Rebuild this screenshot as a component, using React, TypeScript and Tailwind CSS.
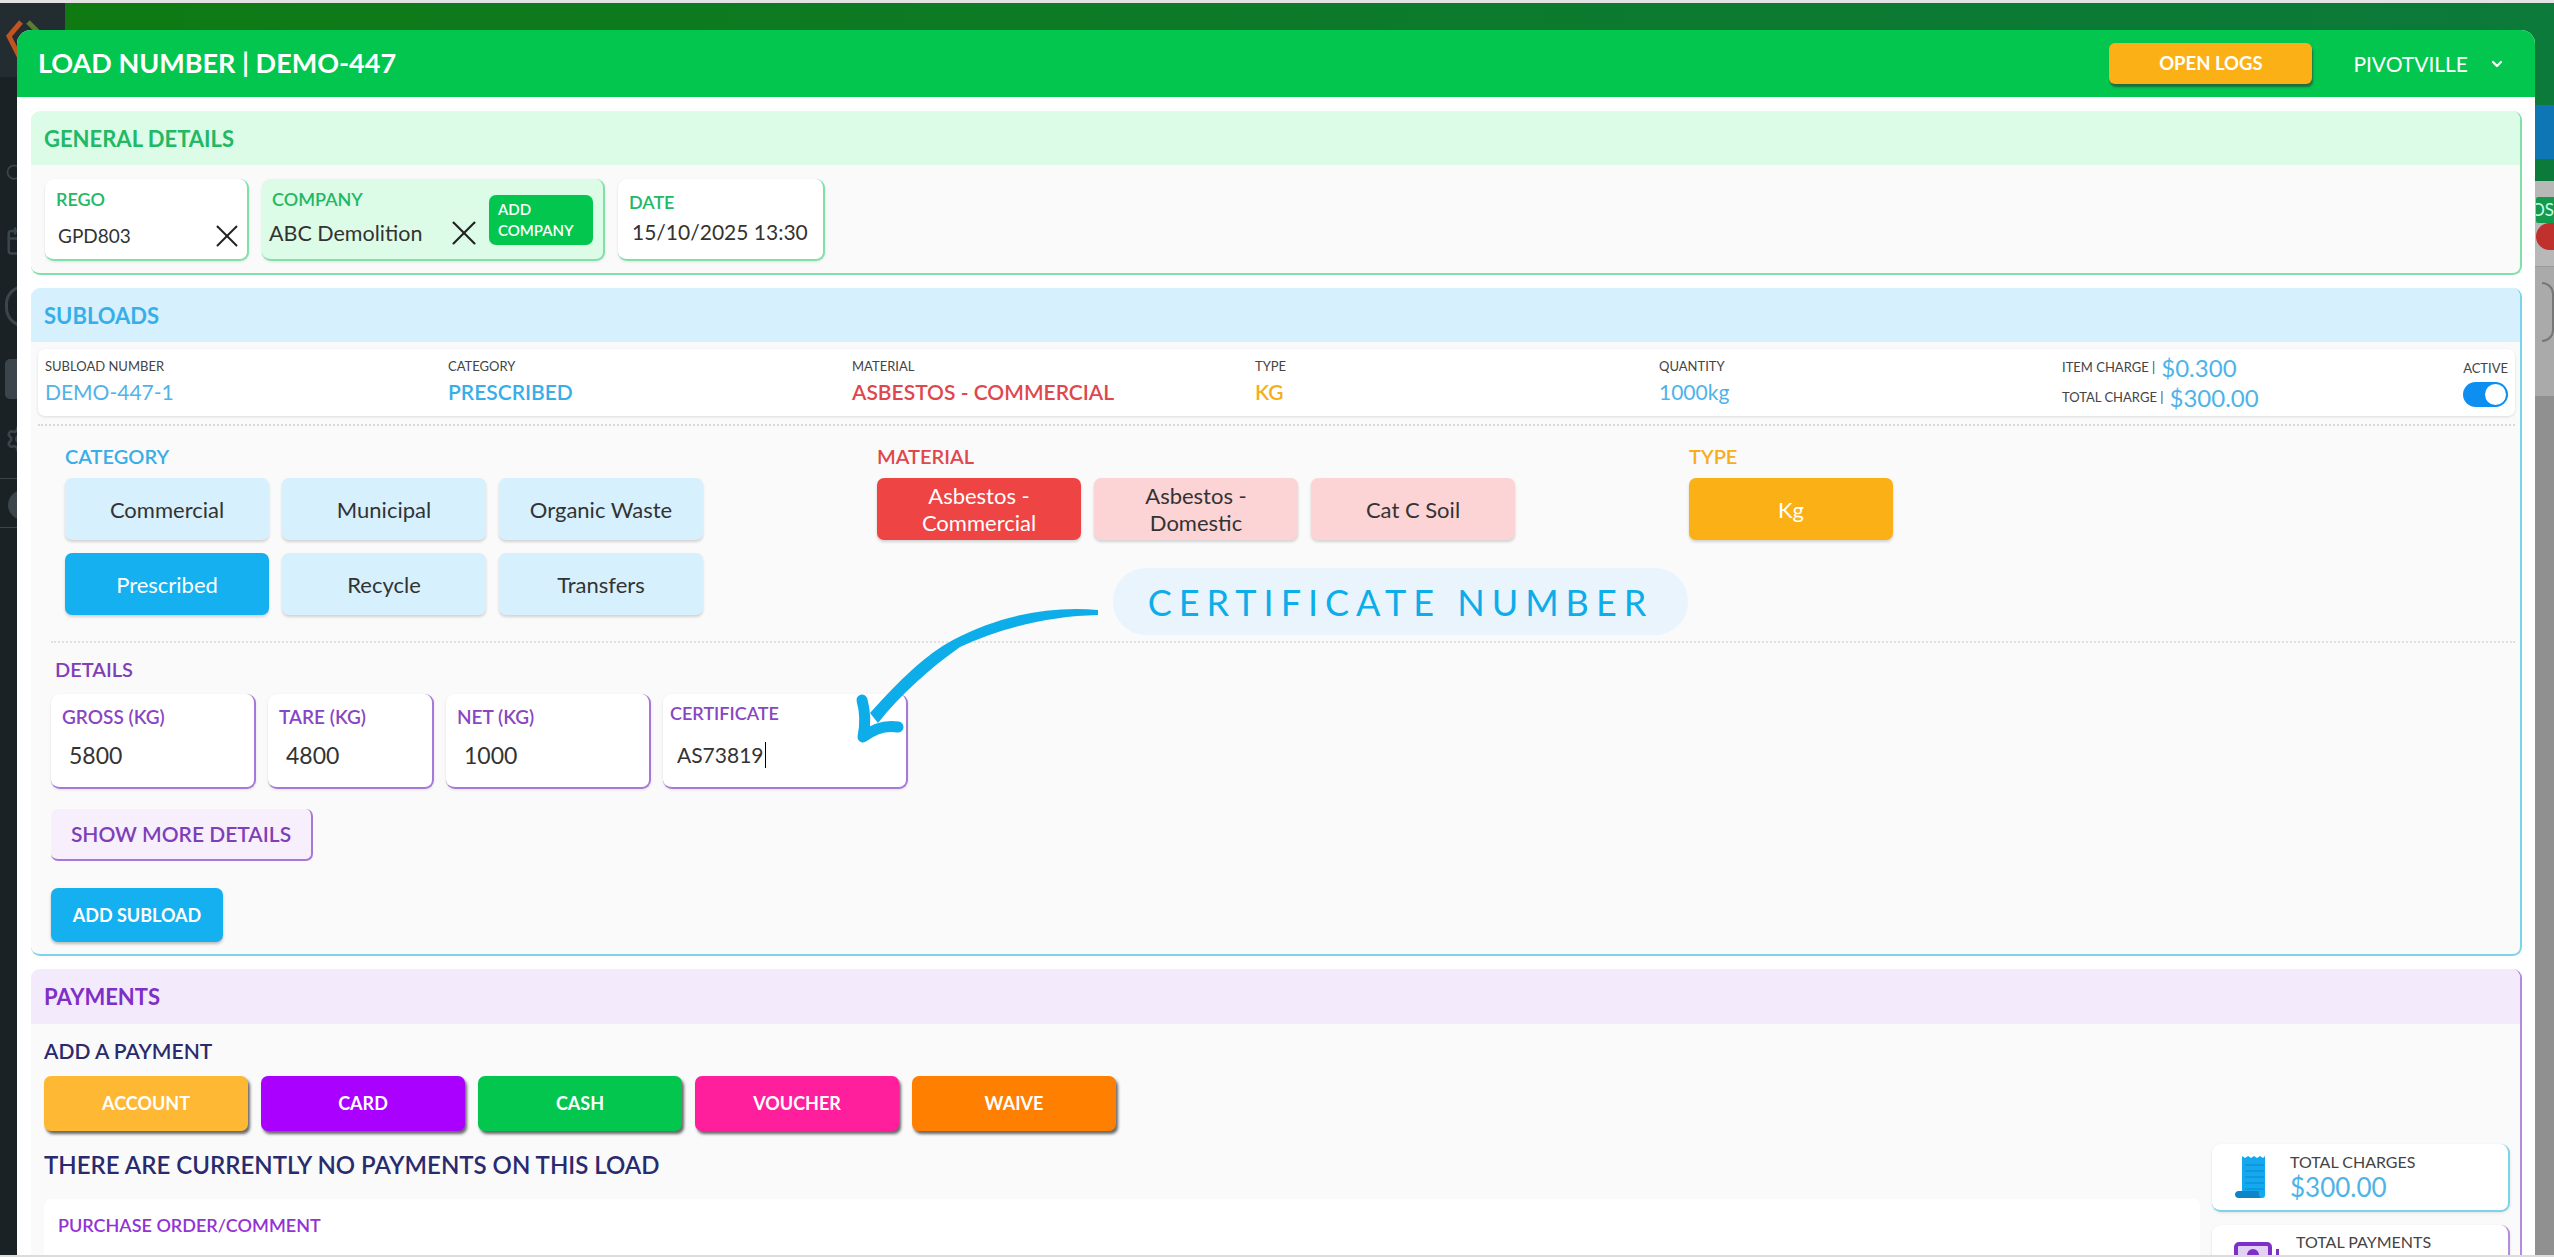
import React from 'react';
import { ChevronDown, X, Search, Calendar, Settings } from 'lucide-react';

const font = "font-['Lato','Liberation_Sans',sans-serif]";

const ChoiceButton = ({ label, className }: { label: string; className: string }) => (
  <div className={`flex h-[62px] w-[204px] items-center justify-center rounded-[7px] px-4 text-center text-[22px] leading-[27px] shadow-[0_2px_3px_rgba(0,0,0,0.16)] ${className}`}>
    {label}
  </div>
);

const PayButton = ({ label, className }: { label: string; className: string }) => (
  <div className={`flex h-[55px] w-[204px] items-center justify-center rounded-[7px] text-[18px] font-bold text-white shadow-[2px_3px_3px_rgba(40,40,40,0.7)] ${className}`}>
    {label}
  </div>
);

const DetailField = ({ label, value, width, certificate }: { label: string; value: string; width: string; certificate?: boolean }) => (
  <div className={`${width} h-[95px] rounded-[9px] border-r-2 border-b-2 border-[#a878d8] bg-white shadow-[0_1px_3px_rgba(0,0,0,0.1)] ${certificate ? 'pt-[8px] pl-[7px]' : 'pt-[12px] pl-[11px]'}`}>
    <div className={`leading-[22px] font-semibold text-[#8a45c4] ${certificate ? 'text-[18px]' : 'text-[19px]'}`}>{label}</div>
    <div className={`ml-[7px] flex items-center leading-[26px] text-[#333] ${certificate ? 'mt-[18px] text-[21px]' : 'mt-[14px] text-[23px]'}`}>
      {value}
      {certificate && <span className="ml-px h-[26px] w-px bg-black" />}
    </div>
  </div>
);

const SummaryCol = ({ label, value, className, width }: { label: string; value: string; className: string; width: string }) => (
  <div className={`${width} -mt-[3px]`}>
    <div className="text-[13px] leading-[16px] text-[#444]">{label}</div>
    <div className={`mt-[5px] text-[21px] leading-[26px] ${className}`}>{value}</div>
  </div>
);

const Backdrop = () => (
  <div className="flex h-full">
    <div className="w-[65px] shrink-0 bg-[#1a2226]">
      <div className="h-[77px] bg-[#232c31] pt-[20px] pl-[6px]">
        <svg width="34" height="40" viewBox="0 0 34 40" fill="none" strokeWidth="5">
          <path d="M15 2 L3 16 L14 38" stroke="#c2541f" />
          <path d="M22 2 L32 12" stroke="#5c7d2a" />
        </svg>
      </div>
      <div className="flex flex-col pl-[5px] text-[#3a464c]">
        <Search className="mt-[86px] h-[20px] w-[20px]" />
        <Calendar className="mt-[38px] h-[40px] w-[30px]" />
        <div className="mt-[24px] h-[42px] w-[38px] rounded-full border-[3px] border-[#3a464c]" />
        <div className="mt-[32px] h-[40px] w-[22px] rounded-[5px] bg-[#3a464c]" />
        <Settings className="mt-[20px] h-[40px] w-[30px]" />
      </div>
      <div className="mt-[19px] h-[50px] border-y border-[#3a464c] pt-[11px] pl-[8px]">
        <div className="h-[30px] w-[30px] rounded-full bg-[#3a464c]" />
      </div>
    </div>
    <div className="flex min-w-0 flex-1 flex-col">
      <div className="h-[105px] bg-gradient-to-r from-[#0f7a12] to-[#0b7a3a]" />
      <div className="flex h-[54px] justify-end bg-[#0b7a3a]">
        <div className="w-[30px] rounded-l-[4px] bg-[#0f76b5]" />
      </div>
      <div className="h-[22px] bg-[#0b7a3a]" />
      <div className="flex-1 bg-[#909090]">
        <div className="h-[85px] bg-[#b8b8b8] pt-[16px]">
          <div className="ml-auto flex h-[26px] w-[18px] items-center justify-end overflow-hidden rounded-l-[2px] bg-[#149a4c] text-[17px] text-[#cfe]">OS</div>
          <div className="ml-auto h-[27px] w-[18px] rounded-l-full bg-[#c0302c]" />
        </div>
        <div className="h-[130px] border-t border-[#999] bg-[#aaaaaa] pt-[15px]">
          <div className="ml-auto h-[60px] w-[12px] rounded-r-full border-2 border-l-0 border-[#777]" />
        </div>
      </div>
    </div>
  </div>
);

export default function App() {
  return (
    <div className={`relative h-[1257px] w-[2554px] overflow-hidden ${font}`}>
      <Backdrop />
      <div className="absolute top-0 left-0 h-[3px] w-full bg-[#e3e3e3]" />

      {/* modal */}
      <div className="absolute top-[30px] left-[17px] h-[1240px] w-[2518px] rounded-t-[14px] bg-white">
        <div className="flex h-[67px] items-center rounded-t-[14px] bg-[#03c64f] pr-[30px] pl-[21px] text-white">
          <div className="text-[27px] font-bold">LOAD NUMBER | DEMO-447</div>
          <div className="ml-auto flex h-[41px] w-[203px] items-center justify-center rounded-[6px] bg-[#fbb116] text-[18.5px] font-bold shadow-[1px_3px_2px_rgba(50,50,50,0.6)]">OPEN LOGS</div>
          <div className="ml-[41px] text-[21px]">PIVOTVILLE</div>
          <ChevronDown className="ml-[21px] h-[16px] w-[16px]" strokeWidth={3.5} />
        </div>

        <div className="flex flex-col gap-[13px] px-[14px] pt-[14px]">
          {/* general */}
          <section className="h-[164px] w-[2491px] overflow-hidden rounded-[9px] border-r-2 border-b-2 border-[#7fe0a8] bg-[#fafafa]">
            <div className="flex h-[54px] items-center bg-[#dcfce7] pl-[13px] text-[22px] font-bold text-[#22b865]">GENERAL DETAILS</div>
            <div className="flex gap-[13px] pt-[14px] pl-[14px]">
              <div className="h-[82px] w-[204px] rounded-[9px] border-r-2 border-b-2 border-[#7fe0a8] bg-white pt-[9px] pl-[11px] shadow-[0_1px_3px_rgba(0,0,0,0.1)]">
                <div className="text-[18px] leading-[22px] font-semibold text-[#22b865]">REGO</div>
                <div className="mt-[13px] flex items-center pr-[10px] pl-[2px] text-[19px] leading-[26px] text-[#333]">
                  GPD803
                  <X className="-my-[6px] -mr-[9px] ml-auto h-[38px] w-[38px] text-[#222]" strokeWidth={1.2} />
                </div>
              </div>
              <div className="flex h-[82px] w-[343px] rounded-[9px] border-r-2 border-b-2 border-[#7fe0a8] bg-[#dcfce7] pl-[7px] shadow-[0_1px_3px_rgba(0,0,0,0.1)]">
                <div className="w-[213px] pt-[9px]">
                  <div className="pl-[3px] text-[18px] leading-[22px] font-semibold text-[#22b865]">COMPANY</div>
                  <div className="mt-[10px] flex items-center text-[21.5px] leading-[26px] text-[#333]">
                    ABC Demolition
                    <X className="-my-[8px] -mr-[3px] ml-auto h-[42px] w-[42px] text-[#222]" strokeWidth={1.2} />
                  </div>
                </div>
                <div className="mt-[16px] ml-[7px] h-[50px] w-[104px] rounded-[7px] bg-[#03c64f] pt-[4px] pl-[9px] text-[15px] leading-[21px] font-semibold text-white">
                  ADD<br />COMPANY
                </div>
              </div>
              <div className="h-[82px] w-[207px] rounded-[9px] border-r-2 border-b-2 border-[#7fe0a8] bg-white pt-[12px] pl-[11px] shadow-[0_1px_3px_rgba(0,0,0,0.1)]">
                <div className="text-[18px] leading-[22px] font-semibold text-[#22b865]">DATE</div>
                <div className="mt-[6px] ml-[3px] text-[21px] leading-[26px] text-[#333]">15/10/2025 13:30</div>
              </div>
            </div>
          </section>

          {/* subloads */}
          <section className="h-[668px] w-[2491px] overflow-hidden rounded-[9px] border-r-2 border-b-2 border-[#7dd3ea] bg-[#fafafa]">
            <div className="flex h-[54px] items-center bg-[#d6f0fd] pl-[13px] text-[22px] font-bold text-[#38aee8]">SUBLOADS</div>
            <div className="mx-[7px] mt-[7px] flex h-[67px] w-[2477px] items-center rounded-[7px] bg-white pr-[7px] pl-[7px] shadow-[0_1px_3px_rgba(0,0,0,0.12)]">
              <SummaryCol width="w-[403px]" label="SUBLOAD NUMBER" value="DEMO-447-1" className="text-[#4fb3e8]" />
              <SummaryCol width="w-[404px]" label="CATEGORY" value="PRESCRIBED" className="text-[21.5px] font-semibold text-[#38aee8]" />
              <SummaryCol width="w-[403px]" label="MATERIAL" value="ASBESTOS - COMMERCIAL" className="font-semibold text-[#e0474c]" />
              <SummaryCol width="w-[404px]" label="TYPE" value="KG" className="font-semibold text-[#f5ae1c]" />
              <SummaryCol width="w-[403px]" label="QUANTITY" value="1000kg" className="text-[#4fb3e8]" />
              <div className="text-[13px] text-[#444]">
                <div className="flex h-[30px] items-center gap-[6px]">ITEM CHARGE | <span className="text-[24px] text-[#4fb3e8]">$0.300</span></div>
                <div className="flex h-[30px] items-center gap-[6px]">TOTAL CHARGE | <span className="text-[24px] text-[#4fb3e8]">$300.00</span></div>
              </div>
              <div className="ml-auto flex flex-col items-end">
                <div className="text-[13px] leading-[18px] text-[#444]">ACTIVE</div>
                <div className="mt-[5px] flex h-[25px] w-[45px] items-center justify-end rounded-full bg-[#0c8ff0] pr-[2px]">
                  <div className="h-[21px] w-[21px] rounded-full bg-white" />
                </div>
              </div>
            </div>
            <div className="mx-[7px] mt-[8px] w-[2477px] border-t-2 border-dotted border-[#d8d8d8]" />

            <div className="mt-[17px] flex pl-[34px]">
              <div className="w-[812px]">
                <div className="text-[20px] leading-[26px] font-semibold text-[#38aee8]">CATEGORY</div>
                <div className="mt-[9px] grid w-[638px] grid-cols-3 gap-[13px]">
                  <ChoiceButton label="Commercial" className="bg-[#d6f0fd] text-[#333]" />
                  <ChoiceButton label="Municipal" className="bg-[#d6f0fd] text-[#333]" />
                  <ChoiceButton label="Organic Waste" className="bg-[#d6f0fd] text-[#333]" />
                  <ChoiceButton label="Prescribed" className="bg-[#14b0f0] text-white" />
                  <ChoiceButton label="Recycle" className="bg-[#d6f0fd] text-[#333]" />
                  <ChoiceButton label="Transfers" className="bg-[#d6f0fd] text-[#333]" />
                </div>
              </div>
              <div className="w-[812px]">
                <div className="text-[20px] leading-[26px] font-semibold text-[#e0474c]">MATERIAL</div>
                <div className="mt-[9px] flex gap-[13px]">
                  <ChoiceButton label="Asbestos - Commercial" className="bg-[#ef4444] text-white" />
                  <ChoiceButton label="Asbestos - Domestic" className="bg-[#fcd4d6] text-[#333]" />
                  <ChoiceButton label="Cat C Soil" className="bg-[#fcd4d6] text-[#333]" />
                </div>
              </div>
              <div>
                <div className="text-[20px] leading-[26px] font-semibold text-[#f5ae1c]">TYPE</div>
                <ChoiceButton label="Kg" className="mt-[9px] bg-[#fbb116] text-white" />
              </div>
            </div>

            <div className="mx-[20px] mt-[26px] w-[2464px] border-t-2 border-dotted border-[#e0e0e0]" />

            <div className="mt-[13px] pl-[24px] text-[20px] leading-[26px] font-semibold text-[#7e3fb8]">DETAILS</div>
            <div className="mt-[12px] flex gap-[12px] pl-[20px]">
              <DetailField label="GROSS (KG)" value="5800" width="w-[205px]" />
              <DetailField label="TARE (KG)" value="4800" width="w-[166px]" />
              <DetailField label="NET (KG)" value="1000" width="w-[205px]" />
              <DetailField label="CERTIFICATE" value="AS73819" width="w-[245px]" certificate />
            </div>
            <div className="mt-[20px] ml-[20px] flex h-[52px] w-[262px] items-center justify-center rounded-[7px] border-r-2 border-b-2 border-[#a878d8] bg-[#f8effd] text-[21px] font-semibold text-[#7e3fb8]">SHOW MORE DETAILS</div>
            <div className="mt-[27px] ml-[20px] flex h-[54px] w-[172px] items-center justify-center rounded-[7px] bg-[#14b0f0] text-[18px] font-bold text-white shadow-[0_2px_3px_rgba(0,0,0,0.25)]">ADD SUBLOAD</div>
          </section>

          {/* payments */}
          <section className="h-[400px] w-[2491px] rounded-t-[9px] border-r-2 border-[#b48ae0] bg-[#fafafa]">
            <div className="flex h-[55px] items-center rounded-t-[9px] bg-[#f3eafb] pl-[13px] text-[22px] font-bold text-[#7e2fc8]">PAYMENTS</div>
            <div className="mt-[14px] pl-[13px] text-[21px] leading-[26px] font-semibold text-[#2a2a6e]">ADD A PAYMENT</div>
            <div className="mt-[12px] flex gap-[13px] pl-[13px]">
              <PayButton label="ACCOUNT" className="bg-[#ffb833]" />
              <PayButton label="CARD" className="bg-[#a900ff]" />
              <PayButton label="CASH" className="bg-[#03c64f]" />
              <PayButton label="VOUCHER" className="bg-[#ff1f9c]" />
              <PayButton label="WAIVE" className="bg-[#ff8000]" />
            </div>
            <div className="flex pl-[13px]">
              <div className="w-[2156px]">
                <div className="mt-[18px] text-[24px] leading-[32px] font-semibold text-[#2a2a6e]">THERE ARE CURRENTLY NO PAYMENTS ON THIS LOAD</div>
                <div className="mt-[18px] h-[200px] rounded-t-[7px] bg-white pt-[15px] pl-[14px] text-[18px] leading-[22px] font-semibold text-[#9333d4]">PURCHASE ORDER/COMMENT</div>
              </div>
              <div className="mt-[13px] ml-[12px] flex w-[298px] flex-col gap-[13px]">
                <div className="flex h-[68px] items-center rounded-[9px] border-r-2 border-b-2 border-[#7dd3ea] bg-white pl-[23px] shadow-[0_1px_3px_rgba(0,0,0,0.1)]">
                  <svg width="33" height="44" viewBox="0 0 33 44">
                    <path d="M7 1 l3 2 l3 -2 l3 2 l3 -2 l3 2 l3 -2 l3 2 l2 -2 V40 q0 3 -3 3 H7z" fill="#14a8ee" />
                    <path d="M10 10 H29 M10 16 H29 M10 22 H29 M10 28 H29 M10 34 H29" stroke="#0d86cc" strokeWidth="1" />
                    <path d="M3 36 H24 q-1 4 2 7 H3 q-3 -1 -3 -3.5 T3 36z" fill="#0b85c8" />
                  </svg>
                  <div className="ml-[22px]">
                    <div className="text-[16px] leading-[20px] text-[#444]">TOTAL CHARGES</div>
                    <div className="text-[26px] leading-[30px] text-[#4fb3e8]">$300.00</div>
                  </div>
                </div>
                <div className="flex h-[68px] rounded-[9px] border-r-2 border-[#b48ae0] bg-white pl-[22px] shadow-[0_1px_3px_rgba(0,0,0,0.1)]">
                  <svg className="mt-[17px]" width="46" height="40" viewBox="0 0 46 40">
                    <rect x="2" y="2" width="34" height="30" rx="3" fill="#e2d0f5" stroke="#7e2fc8" strokeWidth="4" />
                    <circle cx="19" cy="13" r="6" fill="#7e2fc8" />
                    <rect x="42" y="7" width="3" height="22" fill="#7e2fc8" />
                  </svg>
                  <div className="mt-[7px] ml-[16px] text-[16px] leading-[20px] text-[#444]">TOTAL PAYMENTS</div>
                </div>
              </div>
            </div>
          </section>
        </div>
      </div>

      {/* callout over the form */}
      <div className="absolute top-[568px] left-[1113px] flex h-[67px] w-[575px] items-center justify-center rounded-[33px] bg-[#eaf4fc] text-[36px] tracking-[7px] text-[#0cade9]">CERTIFICATE NUMBER</div>
      <svg className="absolute top-[600px] left-[850px]" width="260" height="150" viewBox="0 0 260 150" fill="none">
        <path d="M248 10 C200 6 150 15 103 40 C75 55 50 80 20 113 L28 123 C50 95 80 68 110 47 C150 28 200 16 248 15z" fill="#0cade9" />
        <path d="M12 100 Q17 118 13 137 Q30 124 48 127" stroke="#0cade9" strokeWidth="11" strokeLinecap="round" strokeLinejoin="round" />
      </svg>
      <div className="absolute bottom-0 left-0 h-[2px] w-full bg-[#dcdcdc]" />
    </div>
  );
}
